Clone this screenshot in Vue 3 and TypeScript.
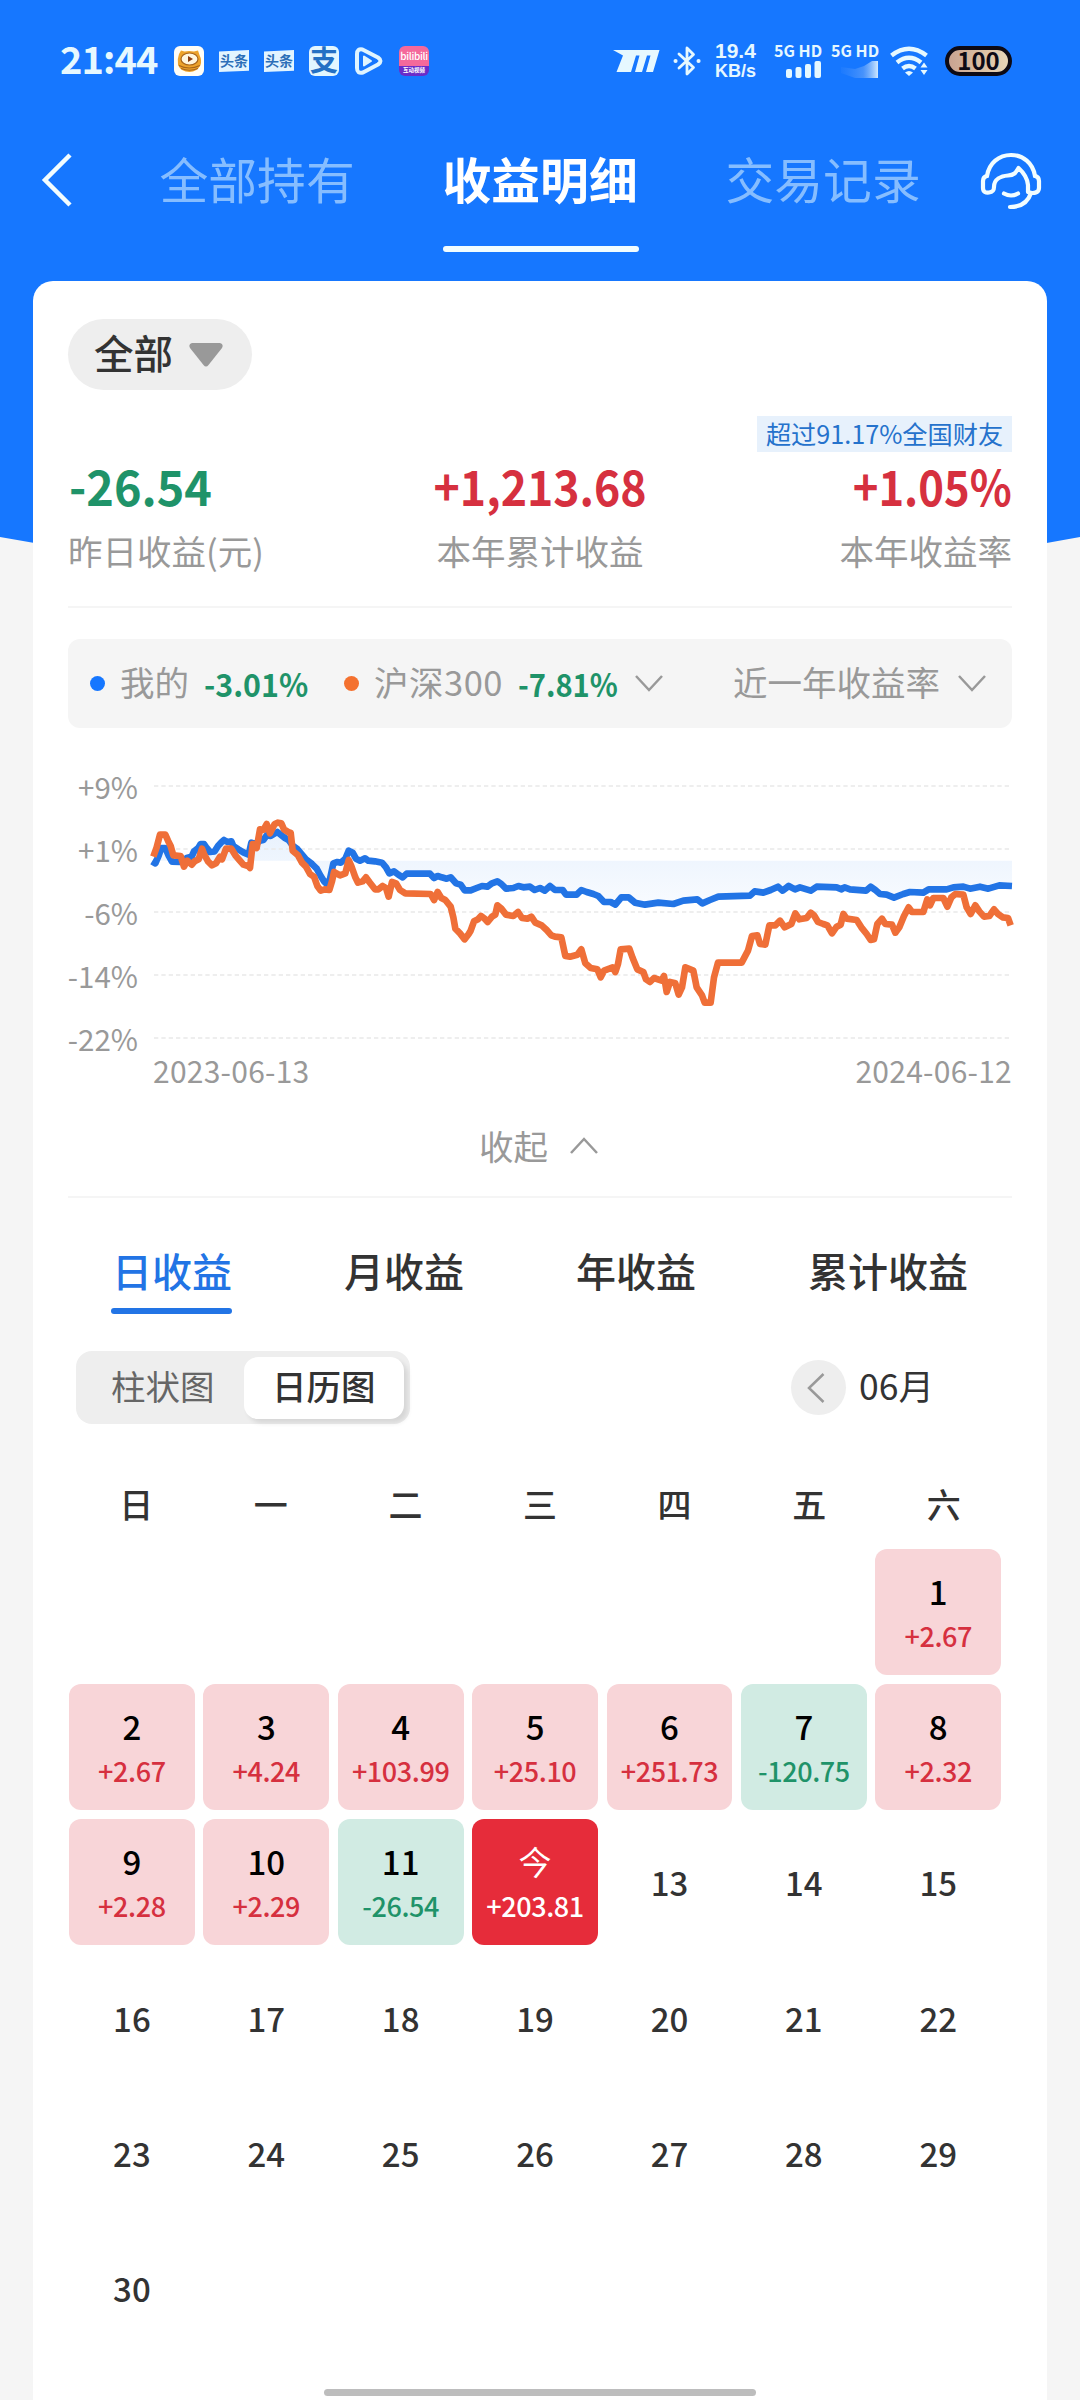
<script setup lang="ts">
interface DayCell {
  label: string
  amount?: string
  tone?: 'gain' | 'loss' | 'today'
}

const navTabs = ['全部持有', '收益明细', '交易记录']
const activeNav = 1

const periodTabs = ['日收益', '月收益', '年收益', '累计收益']
const activePeriod = 0

const axisLabels = ['+9%', '+1%', '-6%', '-14%', '-22%']
const gridLines = [76, 265, 454, 643, 832]

const weekdays = ['日', '一', '二', '三', '四', '五', '六']
const leadingBlanks = 6

const settled: DayCell[] = [
  { label: '1', amount: '+2.67', tone: 'gain' },
  { label: '2', amount: '+2.67', tone: 'gain' },
  { label: '3', amount: '+4.24', tone: 'gain' },
  { label: '4', amount: '+103.99', tone: 'gain' },
  { label: '5', amount: '+25.10', tone: 'gain' },
  { label: '6', amount: '+251.73', tone: 'gain' },
  { label: '7', amount: '-120.75', tone: 'loss' },
  { label: '8', amount: '+2.32', tone: 'gain' },
  { label: '9', amount: '+2.28', tone: 'gain' },
  { label: '10', amount: '+2.29', tone: 'gain' },
  { label: '11', amount: '-26.54', tone: 'loss' },
  { label: '今', amount: '+203.81', tone: 'today' },
]
const upcoming: DayCell[] = Array.from({ length: 18 }, (_, i) => ({ label: String(i + 13) }))
const days: DayCell[] = [...settled, ...upcoming]

// Zero-return level in plot units
const zeroLevel = 300

const mine =
  '306,302 316,308 326,285 334,262 346,262 356,285 366,303 390,304 410,292 425,288 432,272 445,262 452,250 462,250 470,262 480,274 494,272 504,256 515,244 522,238 532,244 544,242 550,256 565,266 580,275 596,282 604,246 616,250 630,240 640,238 650,224 662,226 672,220 682,214 692,222 705,232 716,238 728,255 742,265 756,282 768,296 786,310 800,324 812,346 822,362 830,370 840,355 850,308 862,304 872,306 886,294 896,270 908,276 918,294 930,300 945,293 955,300 975,302 996,306 1008,320 1018,338 1032,332 1045,342 1058,350 1070,339 1140,339 1152,352 1163,346 1175,350 1190,354 1202,350 1218,368 1232,372 1244,389 1262,389 1280,382 1296,376 1312,378 1326,368 1342,362 1354,370 1368,384 1390,382 1405,376 1420,380 1440,378 1454,388 1470,382 1484,390 1500,376 1515,388 1538,388 1548,402 1580,402 1594,388 1610,394 1630,400 1645,406 1662,424 1682,424 1696,432 1714,410 1736,410 1755,426 1785,432 1825,426 1870,430 1900,420 1942,416 1957,428 1980,418 2005,408 2100,405 2114,392 2140,396 2162,388 2184,378 2198,390 2216,376 2235,386 2250,380 2282,390 2300,378 2360,380 2375,386 2384,380 2400,386 2448,390 2462,378 2476,388 2490,400 2510,402 2532,411 2560,400 2580,394 2620,396 2636,386 2690,386 2710,380 2740,378 2760,384 2790,378 2815,384 2848,374 2886,376'

const index300 =
  '310,288 320,260 330,222 346,222 354,240 362,256 370,284 392,286 402,318 412,300 425,312 434,302 446,296 456,264 462,280 474,302 486,314 498,308 510,288 516,296 528,264 544,264 556,284 568,298 580,312 594,316 600,322 608,250 620,262 630,206 640,208 650,190 660,218 674,190 684,186 694,188 702,206 716,215 722,216 728,270 744,284 756,306 768,318 780,340 792,348 802,376 812,390 824,386 838,388 846,362 852,334 870,344 886,338 896,298 904,316 916,350 924,366 938,362 948,350 958,364 975,386 985,386 998,376 1008,382 1016,408 1026,364 1038,368 1050,388 1066,398 1142,400 1152,418 1163,394 1174,412 1186,418 1202,438 1210,470 1216,504 1230,518 1244,536 1256,520 1262,510 1272,482 1284,476 1293,466 1304,474 1313,484 1326,468 1336,462 1342,434 1354,444 1368,462 1390,466 1404,454 1416,472 1432,474 1444,468 1456,486 1475,494 1490,508 1504,524 1515,528 1534,530 1546,586 1560,588 1582,582 1594,566 1606,608 1622,622 1642,626 1652,650 1662,630 1688,620 1696,634 1704,610 1712,566 1738,564 1748,592 1762,626 1780,634 1788,656 1800,664 1812,652 1835,660 1842,646 1850,694 1860,664 1876,668 1886,702 1896,680 1906,620 1930,630 1940,680 1956,704 1964,726 1982,726 1992,650 2004,606 2075,606 2094,570 2106,526 2122,524 2130,550 2146,552 2158,494 2176,494 2190,480 2204,500 2224,490 2236,458 2248,476 2270,472 2282,456 2292,464 2304,484 2320,490 2332,494 2346,518 2360,498 2372,492 2380,460 2390,474 2420,478 2434,500 2450,520 2462,538 2472,536 2482,490 2496,474 2506,490 2526,492 2536,516 2548,500 2562,466 2576,440 2586,454 2620,454 2632,416 2640,434 2650,412 2680,412 2692,438 2704,410 2716,400 2740,402 2750,440 2762,460 2776,434 2788,452 2802,468 2818,466 2832,446 2844,460 2858,470 2874,472 2882,494'

const mineArea = `306,${zeroLevel} ${mine} 2886,${zeroLevel}`
</script>

<template>
  <div class="screen">
    <svg class="backdrop" viewBox="0 0 1080 620" aria-hidden="true">
      <path d="M0 0H1080V537Q540 637 0 537Z" fill="#1677ff" />
    </svg>

    <header class="status">
      <span class="clock">21:44</span>
      <div class="apps">
        <svg width="30" height="30" viewBox="0 0 30 30">
          <rect width="30" height="30" rx="6" fill="#fffdf6" />
          <path d="M5 8 7 4.500 10.500 5.500Q15 4.500 20 5.500L24 4.500 25.500 9Q28 14 26.500 19 23 26 15.500 26 7 26 4 19 3 13 5 8Z" fill="#eda32c" />
          <ellipse cx="15.500" cy="13" rx="8.500" ry="6" fill="#fff6df" stroke="#a8651a" stroke-width="1.200" />
          <path d="M14 10v6l5-3Z" fill="#8a3d12" />
          <path d="M5 19.500q10 5 21 0M7 22.500q8.500 3.500 17 0" stroke="#a8651a" stroke-width="1.200" fill="none" />
        </svg>
        <span class="toutiao">头条</span>
        <span class="toutiao">头条</span>
        <span class="alipay">支</span>
        <svg width="30" height="30" viewBox="0 0 30 30" fill="none" stroke-linejoin="round">
          <path d="M3 8Q3 2.500 8.500 3.500L24 11.500Q29 15 24 18.500L9 26.500Q3 28 3 22Z" stroke="#dff4ff" stroke-width="4" />
          <path d="M10 10.500v9l7-4.500Z" fill="#dff4ff" stroke="#dff4ff" stroke-width="2" />
        </svg>
        <div class="bili">
          <span class="bili-name">bilibili</span>
          <span class="bili-tag">互动视频</span>
        </div>
      </div>

      <div class="signals">
        <svg class="mlogo" width="48" height="24" viewBox="0 0 48 24" fill="#e6f8ff">
          <path d="M0 1H46.500L40 23H33L37.500 6.500H34L29 23H22L26.500 6.500H23L18 23H3.500L10 6.500Z" />
        </svg>
        <svg class="bt" width="28" height="32" viewBox="0 0 28 32" fill="none" stroke="#e6f8ff" stroke-width="2.800" stroke-linejoin="round" stroke-linecap="round">
          <path d="M6 9 20.500 22.500 14 29V3L20.500 9.500 6 23" />
          <path d="M2.500 16h.1M25.500 16h.1" stroke-width="4" />
        </svg>
        <div class="speed">
          <span class="speed-num">19.4</span>
          <span class="speed-unit">KB/s</span>
        </div>
        <div class="sim">
          <span>5G HD</span>
          <svg width="47" height="17" viewBox="0 0 47 17" fill="#e6f8ff">
            <rect x="12" y="8" width="6" height="9" rx="2" />
            <rect x="21.500" y="6" width="6" height="11" rx="2" />
            <rect x="31" y="3" width="6" height="14" rx="2" />
            <rect x="40.500" y="0" width="6.500" height="17" rx="2" />
          </svg>
        </div>
        <div class="sim second">
          <span>5G HD</span>
          <svg width="47" height="17" viewBox="0 0 47 17">
            <defs>
              <linearGradient id="fade" x1="0" x2="1">
                <stop offset="0" stop-color="#5a9bf8" stop-opacity="0.100" />
                <stop offset="0.600" stop-color="#78aef8" stop-opacity="0.500" />
                <stop offset="1" stop-color="#cfe8ff" />
              </linearGradient>
            </defs>
            <path d="M10 6L24 8 33 5 41 0H47V17H24L10 12Z" fill="url(#fade)" />
          </svg>
        </div>
        <svg class="wifi" width="38" height="31" viewBox="0 0 38 31" fill="none" stroke="#e6f8ff" stroke-width="4.500">
          <path d="M1.500 9.500Q19 -4 36.500 9.500" />
          <path d="M7 16.500Q19 7 31 16.500" />
          <path d="M12.500 22.500Q19 17.500 25.500 22.500" />
          <path d="M15 26.500Q19 23.500 23 26.500L19 30Z" fill="#e6f8ff" stroke="none" />
          <path d="M30.500 21.500 34 16.500 37.500 21.500ZM30.500 24 34 29 37.500 24Z" fill="#e6f8ff" stroke="none" />
        </svg>
        <span class="battery">100</span>
      </div>
    </header>

    <nav class="nav">
      <svg class="back" width="36" height="56" viewBox="0 0 36 56" fill="none" stroke="#f2fdff" stroke-width="4.500">
        <path d="M30 3 5 28 30 53" />
      </svg>
      <div class="nav-tabs">
        <div v-for="(tab, i) in navTabs" :key="tab" class="nav-tab" :class="{ active: i === activeNav }">
          {{ tab }}
        </div>
      </div>
      <svg class="headset" width="64" height="60" viewBox="0 0 64 60" fill="none" stroke="#f2fdff" stroke-width="4.200" stroke-linecap="round" stroke-linejoin="round">
        <path d="M8 25C10 12 20 4 32 4S54 12 56 25" />
        <path d="M8 25C5 25.500 4 27 4 30V37C4 41 7 42 10 41.500 13.500 41 15 40 15 36 15 28 22 25 29 24.500 36 24 37 21 39.500 17 45 22 48.500 28 49 34V41C54 43 60 42 60 37V30C60 27 59 25.500 56 25" />
        <path d="M52 42C49 51 42 56 31 56" />
        <path d="M25 42.500Q32 46.500 39 42.500" />
      </svg>
    </nav>

    <main class="card">
      <div class="filter">
        <span>全部</span>
        <svg width="36" height="24" viewBox="0 0 36 24" fill="#999">
          <path d="M4 0H32Q36 1 34 5L20.500 22Q18 25 15.500 22L2 5Q0 1 4 0Z" />
        </svg>
      </div>

      <section class="summary">
        <div class="stat">
          <strong class="green">-26.54</strong>
          <span>昨日收益(元)</span>
        </div>
        <div class="stat mid">
          <strong class="red">+1,213.68</strong>
          <span>本年累计收益</span>
        </div>
        <div class="stat end">
          <em>超过91.17%全国财友</em>
          <strong class="red">+1.05%</strong>
          <span>本年收益率</span>
        </div>
      </section>

      <section class="legend">
        <div class="series first">
          <i class="dot blue"></i>
          <span>我的</span>
          <b>-3.01%</b>
        </div>
        <div class="series">
          <i class="dot orange"></i>
          <span class="index-name">沪深300</span>
          <b>-7.81%</b>
        </div>
        <svg class="chev" width="28" height="17" viewBox="0 0 28 17"><path d="M1 1 14 15 27 1" /></svg>
        <span class="range">近一年收益率</span>
        <svg class="chev" width="28" height="17" viewBox="0 0 28 17"><path d="M1 1 14 15 27 1" /></svg>
      </section>

      <section class="chart">
        <div class="axis">
          <span v-for="label in axisLabels" :key="label">{{ label }}</span>
        </div>
        <svg class="plot" width="874" height="282" viewBox="264 31 2622 846" fill="none">
          <defs>
            <linearGradient id="area" gradientUnits="userSpaceOnUse" x1="0" y1="220" x2="0" y2="430">
              <stop offset="0" stop-color="#e9f2fd" />
              <stop offset="1" stop-color="#f8fbff" />
            </linearGradient>
          </defs>
          <polygon :points="mineArea" fill="url(#area)" />
          <line v-for="y in gridLines" :key="y" x1="312" x2="2886" :y1="y" :y2="y" class="grid-line" />
          <polyline :points="mine" stroke="#2274e5" class="curve" />
          <polyline :points="index300" stroke="#ef6f38" class="curve" />
        </svg>
      </section>
      <div class="dates">
        <span>2023-06-13</span>
        <span>2024-06-12</span>
      </div>

      <div class="collapse">
        <span>收起</span>
        <svg class="chev" width="28" height="17" viewBox="0 0 28 17"><path d="M1 16 14 2 27 16" /></svg>
      </div>

      <div class="periods">
        <div v-for="(tab, i) in periodTabs" :key="tab" class="period" :class="{ active: i === activePeriod }">
          {{ tab }}
        </div>
      </div>

      <div class="controls">
        <div class="segment">
          <span>柱状图</span>
          <span class="on">日历图</span>
        </div>
        <div class="prev">
          <svg width="18" height="30" viewBox="0 0 18 30" fill="none" stroke="#999" stroke-width="2.500"><path d="M16.500 1 2 15 16.500 29" /></svg>
        </div>
        <span class="month">06月</span>
      </div>

      <div class="weekdays">
        <span v-for="w in weekdays" :key="w">{{ w }}</span>
      </div>
      <div class="calendar">
        <div v-for="n in leadingBlanks" :key="'blank' + n"></div>
        <div v-for="day in days" :key="day.label" class="day" :class="day.tone">
          <span class="num">{{ day.label }}</span>
          <span v-if="day.amount" class="amount">{{ day.amount }}</span>
        </div>
      </div>
    </main>

    <div class="home-bar"></div>
  </div>
</template>

<style>
body {
  margin: 0;
}
</style>

<style scoped>
.screen {
  position: relative;
  width: 1080px;
  height: 2400px;
  overflow: hidden;
  background: #f5f5f5;
  font-family: 'Noto Sans CJK SC', 'Noto Sans', sans-serif;
  color: #333;
  display: flex;
  flex-direction: column;
  white-space: nowrap;
}
svg {
  display: block;
  flex: none;
}
.backdrop {
  position: absolute;
  top: 0;
  left: 0;
  width: 1080px;
  height: 620px;
}

/* status bar */
.status {
  position: relative;
  height: 120px;
  box-sizing: border-box;
  padding: 42px 68px 0 60px;
  display: flex;
  align-items: flex-start;
  color: #e6f8ff;
}
.clock {
  width: 114px;
  font-size: 38px;
  line-height: 38px;
  margin-top: -3px;
  font-weight: 700;
  letter-spacing: -0.9px;
}
.apps {
  display: flex;
  gap: 15px;
  align-items: center;
  margin-top: 4px;
}
.toutiao {
  width: 30px;
  height: 22px;
  background: #e2f4ff;
  color: #2c6fb8;
  font-size: 14px;
  line-height: 20px;
  font-weight: 700;
  text-align: center;
  clip-path: polygon(0 7%, 100% 0, 100% 94%, 0 100%);
}
.alipay {
  width: 30px;
  height: 30px;
  border-radius: 6px;
  background: #e2f6ff;
  color: #2470c4;
  font-size: 28px;
  line-height: 26px;
  font-weight: 700;
  text-align: center;
}
.bili {
  width: 30px;
  height: 30px;
  border-radius: 6px;
  overflow: hidden;
  background: linear-gradient(#f4699b 0 68%, #6a2cc8 68%);
  display: flex;
  flex-direction: column;
  align-items: center;
  color: #fff;
}
.bili-name {
  font-size: 10px;
  line-height: 20px;
  height: 20px;
  font-weight: 500;
  letter-spacing: -0.3px;
}
.bili-tag {
  font-size: 5.500px;
  line-height: 8px;
  font-weight: 700;
}
.signals {
  margin-left: auto;
  display: flex;
  align-items: flex-start;
}
.mlogo {
  margin: 7px 12px 0 0;
}
.bt {
  margin: 3px 14px 0 0;
}
.speed {
  width: 59px;
  margin-top: -2px;
  display: flex;
  flex-direction: column;
  font-family: 'Liberation Sans', sans-serif;
  font-weight: 700;
}
.speed-num {
  font-size: 21px;
  line-height: 22px;
  height: 22px;
}
.speed-unit {
  font-size: 18px;
  line-height: 18px;
  height: 18px;
}
.sim {
  width: 47px;
  margin-right: 10px;
  font-size: 16px;
  line-height: 16px;
  font-weight: 700;
}
.sim span {
  display: block;
  margin-bottom: 3px;
}
.sim.second {
  margin-right: 12px;
}
.wifi {
  margin: 4px 17px 0 0;
}
.battery {
  box-sizing: border-box;
  width: 67px;
  height: 30px;
  margin-top: 4px;
  border: 4px solid #0d0a14;
  border-radius: 15px;
  background: linear-gradient(90deg, #c9a391, #dcc2a4 60%, #e8d6b8);
  color: #0d0a14;
  font-size: 24px;
  line-height: 19px;
  font-weight: 700;
  text-align: center;
}

/* title bar */
.nav {
  position: relative;
  height: 161px;
  box-sizing: border-box;
  padding: 31px 37px 0 39.500px;
  display: flex;
  align-items: flex-start;
}
.back {
  margin: 1px 84px 0 0;
}
.nav-tabs {
  display: flex;
  gap: 87px;
  margin-top: 1.500px;
}
.nav-tab {
  width: 196px;
  font-size: 48.800px;
  line-height: 49px;
  color: #86bdff;
}
.nav-tab.active {
  color: #fff;
  font-weight: 700;
}
.nav-tab.active::after {
  content: '';
  display: block;
  height: 6px;
  border-radius: 3px;
  background: #f2fdff;
  margin-top: 44.500px;
}
.headset {
  margin-left: auto;
}

/* card */
.card {
  position: relative;
  flex: 1;
  margin: 0 33px;
  padding: 38px 35px 0;
  background: #fff;
  border-radius: 20px 20px 0 0;
}
.filter {
  box-sizing: border-box;
  width: 184px;
  height: 71px;
  border-radius: 36px;
  background: #eee;
  padding: 0 0 5px 26px;
  display: flex;
  align-items: center;
  font-size: 39.500px;
  line-height: 40px;
  font-weight: 500;
}
.filter svg {
  margin: 6px 0 0 15px;
}

.summary {
  height: 216px;
  box-sizing: border-box;
  padding-bottom: 38px;
  display: grid;
  grid-template-columns: 1fr auto 1fr;
  align-items: end;
}
.stat {
  display: flex;
  flex-direction: column;
  align-items: flex-start;
}
.stat.mid {
  align-items: center;
}
.stat.end {
  align-items: flex-end;
}
.stat strong {
  font-size: 49px;
  line-height: 50px;
  font-weight: 700;
  margin: 0 0 22px 1px;
  transform: scaleX(0.955);
  transform-origin: left;
}
.stat.mid strong {
  margin-left: 0;
  transform: scaleX(0.91);
  transform-origin: center;
}
.stat.end strong {
  transform: scaleX(0.89);
  transform-origin: right;
}
.stat span {
  font-size: 34.500px;
  line-height: 36px;
  color: #999;
}
.stat em {
  box-sizing: border-box;
  width: 255px;
  height: 36px;
  margin-bottom: 8px;
  text-align: center;
  font-style: normal;
  font-size: 25.200px;
  line-height: 34px;
  color: #2572cc;
  background: #e7f1fc;
}
.green {
  color: #1f9369;
}
.red {
  color: #d6303f;
}

.legend {
  position: relative;
  margin-top: 33px;
  height: 89px;
  box-sizing: border-box;
  padding: 0 26px 0 22px;
  border-radius: 12px;
  background: #f5f5f5;
  display: flex;
  align-items: center;
  font-size: 34.500px;
  line-height: 36px;
  color: #999;
}
.legend::before {
  content: '';
  position: absolute;
  left: 0;
  right: 0;
  top: -33px;
  height: 2px;
  background: #f5f5f5;
}
.series {
  width: 291px;
  display: flex;
  align-items: center;
}
.series.first {
  width: 254px;
}
.series span,
.range {
  padding-bottom: 6px;
}
.index-name {
  letter-spacing: 0.500px;
}
.dot {
  width: 15px;
  height: 15px;
  border-radius: 50%;
  margin-right: 15px;
}
.dot.blue {
  background: #1677ff;
}
.dot.orange {
  background: #f4712f;
}
.series b {
  margin-left: 15px;
  font-size: 32px;
  font-weight: 700;
  color: #1f9369;
  padding-bottom: 2px;
  transform: scaleX(0.91);
  transform-origin: left;
}
.series.first b {
  transform: scaleX(0.95);
}
.chev path {
  fill: none;
  stroke: #999;
  stroke-width: 2.500;
}
.range {
  margin-left: auto;
  margin-right: 18px;
}

.chart {
  margin-top: 42.500px;
  height: 282px;
  display: flex;
}
.axis {
  width: 70px;
  display: flex;
  flex-direction: column;
  justify-content: space-between;
  align-items: flex-end;
  font-size: 29.500px;
  line-height: 30px;
  height: 282px;
  color: #999;
}
.axis span {
  height: 30px;
}
.plot {
  overflow: visible;
}
.grid-line {
  stroke: #e9e9e9;
  stroke-width: 4;
  stroke-dasharray: 13 9;
}
.curve {
  stroke-width: 20;
  stroke-linejoin: round;
}
.dates {
  margin: 2px 0 0 85px;
  display: flex;
  justify-content: space-between;
  font-size: 30px;
  line-height: 30px;
  letter-spacing: 0.250px;
  color: #999;
}
.collapse {
  margin-top: 42.500px;
  height: 69px;
  padding-right: 3px;
  border-bottom: 2px solid #f5f5f5;
  display: flex;
  justify-content: center;
  gap: 22px;
  font-size: 34.500px;
  line-height: 36px;
  color: #999;
}
.collapse .chev {
  margin-top: 10px;
}

.periods {
  height: 65px;
  padding: 51.500px 0 0 44px;
  display: flex;
  gap: 112px;
  font-size: 40px;
  line-height: 40px;
  font-weight: 500;
}
.period.active {
  color: #2274e5;
}
.period.active::after {
  content: '';
  display: block;
  height: 6px;
  width: 121px;
  margin-left: -1px;
  border-radius: 3px;
  background: #2274e5;
  margin-top: 18.500px;
}

.controls {
  margin: 36.500px 0 0 8px;
  display: flex;
  align-items: center;
  height: 73px;
}
.segment {
  box-sizing: border-box;
  width: 334px;
  height: 73px;
  border-radius: 16px;
  background: #eee;
  padding: 6px 6px 5px 0;
  display: flex;
  font-size: 34.500px;
  line-height: 57px;
  color: #666;
}
.segment span {
  flex: none;
  width: 167.500px;
  padding-left: 6px;
  box-sizing: border-box;
  text-align: center;
}
.segment .on {
  width: 160.500px;
  padding: 0;
  border-radius: 14px;
  background: #fff;
  color: #333;
  font-weight: 500;
  box-shadow: 4px 4px 5px rgba(0, 0, 0, 0.1);
}
.prev {
  width: 55px;
  height: 55px;
  border-radius: 50%;
  background: #eee;
  margin-left: 380.500px;
  display: flex;
  align-items: center;
  justify-content: center;
}
.prev svg {
  margin-right: 4px;
}
.month {
  margin-left: 13.500px;
  padding-bottom: 5px;
  font-size: 35.500px;
  line-height: 36px;
}

.weekdays {
  margin: 61.500px 0 0 1px;
  width: 942px;
  display: grid;
  grid-template-columns: repeat(7, 1fr);
  text-align: center;
  font-size: 34px;
  line-height: 36px;
  font-weight: 500;
}
.calendar {
  margin: 27.500px 0 0 1px;
  display: grid;
  grid-template-columns: repeat(7, 125.800px);
  grid-auto-rows: 126px;
  column-gap: 8.600px;
  row-gap: 9.200px;
}
.day {
  display: flex;
  flex-direction: column;
  align-items: center;
  justify-content: center;
  border-radius: 12px;
}
.num {
  font-size: 33px;
  line-height: 34px;
  font-weight: 500;
}
.amount {
  margin-top: 13.600px;
  font-size: 27px;
  line-height: 28px;
  font-weight: 500;
  letter-spacing: -0.400px;
}
.gain,
.loss,
.today {
  justify-content: flex-start;
  padding-top: 25px;
  box-sizing: border-box;
}
.gain .num,
.loss .num {
  color: #000;
}
.gain {
  background: #f8d5d8;
  color: #d6303f;
}
.loss {
  background: #d1ebe3;
  color: #1f9369;
}
.today {
  background: #e62c3a;
  color: #fff;
}
.today .num {
  font-weight: 400;
}

.home-bar {
  position: absolute;
  left: 324px;
  top: 2389px;
  width: 432px;
  height: 7px;
  border-radius: 4px;
  background: #bdbdbd;
}
</style>
